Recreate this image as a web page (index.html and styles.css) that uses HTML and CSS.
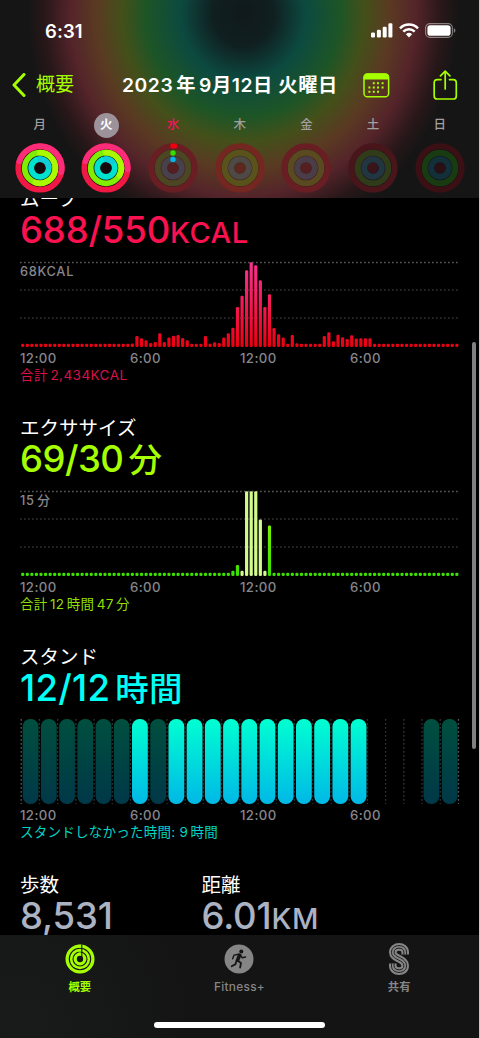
FILE: index.html
```html
<!DOCTYPE html>
<html lang="ja">
<head>
    <meta charset="UTF-8">
    <meta name="viewport" content="width=device-width, initial-scale=1.0">
    <title>フィットネス</title>
    <link rel="stylesheet" href="styles.css">
</head>
<body>

<div class="screen">
    <header class="header">
        <div class="status-bar">
            <span class="time">6:31</span>
            <div class="status-icons">
                <svg width="22" height="15" viewBox="0 0 22 15" fill="#fff">
                    <rect x="0" y="9.5" width="4" height="5" rx="1.2"/>
                    <rect x="5.9" y="6.8" width="4" height="7.7" rx="1.2"/>
                    <rect x="11.7" y="3.7" width="4" height="10.8" rx="1.2"/>
                    <rect x="17.4" y="0.3" width="4" height="14.2" rx="1.2"/>
                </svg>
                <svg width="20" height="15" viewBox="0 0 20 15" fill="none" stroke="#fff" stroke-width="2.5">
                    <path d="M1 5.3a12.8 12.8 0 0 1 18 0"/>
                    <path d="M4.3 8.7a8.1 8.1 0 0 1 11.4 0"/>
                    <path d="M6.9 11.2a4.5 4.5 0 0 1 6.2 0L10 14.4z" fill="#fff" stroke="none"/>
                </svg>
                <svg width="31" height="15" viewBox="0 0 31 15">
                    <rect x="0.6" y="0.6" width="26.8" height="13.8" rx="4.4" fill="none" stroke="#fff" stroke-opacity="0.45" stroke-width="1.1"/>
                    <rect x="2.4" y="2.3" width="23.2" height="10.4" rx="2.8" fill="#fff"/>
                    <path d="M28.8 5.2v4.6c1-.4 1.6-1.2 1.6-2.3s-.6-1.9-1.6-2.3z" fill="#fff" fill-opacity="0.45"/>
                </svg>
            </div>
        </div>

        <nav class="nav-bar">
            <a class="back" href="#">
                <svg width="14" height="24" viewBox="0 0 14 24" fill="none" stroke="#a6ff00" stroke-width="3" stroke-linecap="round" stroke-linejoin="round">
                    <path d="M12 1.500L2 12l10 10.500"/>
                </svg>
                <span>概要</span>
            </a>
            <h1 class="title"><span>2023</span><span class="kanji">年</span><span>9</span>月<span>12</span>日 火曜日</h1>
            <svg class="calendar" width="27" height="26" viewBox="0 0 27 26">
                <rect x="1" y="1" width="24.6" height="22.8" rx="3.4" fill="none" stroke="#a6ff00" stroke-width="1.5"/>
                <path d="M.6 6.6V4.2C.6 1.8 2 .4 4.400.4h17.800c2.400 0 3.800 1.400 3.800 3.800v2.400z" fill="#a6ff00"/>
                <g fill="#a6ff00">
                    <rect x="9.8" y="9.2" width="2" height="2"/><rect x="14" y="9.2" width="2" height="2"/><rect x="18.6" y="9.2" width="2" height="2"/>
                    <rect x="5.4" y="13.5" width="2" height="2"/><rect x="9.8" y="13.5" width="2" height="2"/><rect x="14" y="13.5" width="2" height="2"/><rect x="18.6" y="13.5" width="2" height="2"/>
                    <rect x="5.4" y="17.8" width="2" height="2"/><rect x="9.8" y="17.8" width="2" height="2"/><rect x="14" y="17.8" width="2" height="2"/>
                </g>
            </svg>
            <svg class="share" width="25" height="31" viewBox="0 0 25 31" fill="none" stroke="#a6ff00" stroke-width="1.7" stroke-linecap="round" stroke-linejoin="round">
                <path d="M8 9.6H4.3C2.3 9.6 1.2 10.7 1.2 12.7v13.2c0 2 1.1 3.1 3.1 3.1h15.9c2 0 3.1-1.1 3.1-3.1V12.7c0-2-1.1-3.1-3.1-3.1h-3.7"/>
                <path d="M12.2 19V1.5M7.5 5.9l4.7-4.7 4.7 4.7"/>
            </svg>
        </nav>

        <div class="week" id="week"></div>
    </header>

    <main class="content">
        <section class="metric move">
            <h2>ムーブ</h2>
            <p class="value">688/550<small>KCAL</small></p>
            <div class="chart" id="move-chart"><span class="peak">68KCAL</span></div>
            <div class="axis"><span>12:00</span><span>6:00</span><span>12:00</span><span>6:00</span></div>
            <p class="total">合計<i></i>2,434KCAL</p>
        </section>

        <section class="metric exercise">
            <h2>エクササイズ</h2>
            <p class="value">69/30<i></i><b>分</b></p>
            <div class="chart" id="exercise-chart"><span class="peak">15<i></i>分</span></div>
            <div class="axis"><span>12:00</span><span>6:00</span><span>12:00</span><span>6:00</span></div>
            <p class="total">合計<i></i>12<i></i>時間<i></i>47<i></i>分</p>
        </section>

        <section class="metric stand">
            <h2>スタンド</h2>
            <p class="value">12/12<i></i><b>時間</b></p>
            <div class="chart" id="stand-chart"></div>
            <div class="axis"><span>12:00</span><span>6:00</span><span>12:00</span><span>6:00</span></div>
            <p class="total">スタンドしなかった時間: 9<i></i>時間</p>
        </section>

        <div class="summary">
            <div class="steps">
                <h2>歩数</h2>
                <p class="value">8,531</p>
            </div>
            <div class="distance">
                <h2>距離</h2>
                <p class="value">6.01<small>KM</small></p>
            </div>
        </div>
    </main>

    <footer class="tab-bar">
        <div class="tabs">
            <a class="tab active" href="#">
                <svg width="30" height="32" viewBox="0 0 30 32">
                    <circle cx="15" cy="16" r="14.5" fill="#a6ff00"/>
                    <g fill="none" stroke="#151515" stroke-width="1.1">
                        <circle cx="15" cy="16" r="10.7"/>
                        <circle cx="15" cy="16" r="7"/>
                        <circle cx="15" cy="16" r="2.6" fill="#151515"/>
                        <path d="M16.800 1.500v12.500"/>
                    </g>
                    <path d="M13.300 1.800h2.600v3h-2.600zM13.300 5.900h2.600v2.500h-2.600zM13.300 9.600h2.600v2.700h-2.600z" fill="#a6ff00"/>
                </svg>
                <span>概要</span>
            </a>
            <a class="tab" href="#">
                <svg width="30" height="32" viewBox="0 0 30 32">
                    <circle cx="15" cy="16" r="14.5" fill="#858585"/>
                    <circle cx="17.300" cy="8.400" r="2" fill="#151515"/>
                    <g fill="none" stroke="#151515" stroke-linecap="round" stroke-linejoin="round">
                        <path d="M15.600 12.200l-2 5" stroke-width="3.6"/>
                        <path d="M14.400 11.300l-4.300.8-1.500 3.700M16.600 12.200l1.600 2.600 3.400-.8" stroke-width="1.4"/>
                        <path d="M13.400 17.600l3.600 2.400-.9 4.500M12.500 17.700l-.9 3.400-3.900 2.200" stroke-width="1.8"/>
                    </g>
                </svg>
                <span>Fitness+</span>
            </a>
            <a class="tab" href="#">
                <svg width="22" height="32" viewBox="0 0 22 32" fill="none">
                    <path d="M17.200 11.500V9.200C17.200 5.600 14.500 3.900 11 3.900S4.800 6 4.800 9.200c0 3.400 2.400 4.600 5.800 6.300 3.800 1.900 6.600 3.500 6.600 7.300s-2.700 5.300-6.200 5.300-6.200-2-6.200-5.300v-2.300" stroke="#858585" stroke-width="7.6"/>
                    <path d="M18.500 11.500V9.200C18.500 5 15.200 2.600 11 2.600S3.500 5.200 3.500 9.200c0 4.200 2.900 5.700 6.500 7.500 3.500 1.800 5.900 3 5.900 6.100 0 2.700-2 4-4.900 4s-4.900-1.400-4.900-4v-2.300M15.900 11.500V9.200c0-2.700-2-4-4.900-4s-4.900 1.400-4.900 4c0 2.700 1.900 3.500 5.100 5.100 4.200 2.100 7.300 4.100 7.300 8.500 0 4.300-3.300 6.600-7.500 6.600S3.500 27 3.500 22.800v-2.300" stroke="#151515" stroke-width="0.9"/>
                </svg>
                <span class="label-cjk">共有</span>
            </a>
        </div>
        <div class="home-indicator"></div>
    </footer>

    <div class="scrollbar"></div>
</div>

<script src="script.js"></script>
</body>
</html>
```

FILE: styles.css
```css
* {
    box-sizing: border-box;
}

body {
    margin: 0;
    background-color: #c8c8c8;
    font-family: Inter, "Noto Sans CJK JP", sans-serif;
    color: #fff;
}

h1, h2, p {
    margin: 0;
    font-weight: 400;
}

a {
    color: inherit;
    text-decoration: none;
}

svg {
    display: block;
    flex-shrink: 0;
}

.screen {
    position: relative;
    display: flex;
    flex-direction: column;
    width: 479px;
    height: 1038px;
    background-color: #000;
    overflow: hidden;
}

/* Header */
.header {
    flex: none;
    height: 198px;
    background: radial-gradient(ellipse 216px 228px at 243px 14px,
        #10191b 0%, #101f20 14%, #0c4a40 29%, #1d5526 45%,
        #43501a 56%, #5a3a22 68%, #54242a 80%, #281719 92%, #151515 100%);
}

.status-bar {
    display: flex;
    justify-content: space-between;
    height: 61px;
    padding: 0 23px 0 45px;
}

.time {
    font-size: 18.5px;
    font-weight: 600;
    line-height: 62px;
    letter-spacing: 0.1px;
}

.status-icons {
    display: flex;
    gap: 6px;
    padding-top: 23px;
}

.nav-bar {
    display: flex;
    align-items: center;
    height: 48px;
    padding-left: 12px;
}

.back {
    display: flex;
    align-items: center;
    width: 110px;
    gap: 10px;
    color: #a6ff00;
    font-size: 19px;
    line-height: 24px;
    padding-bottom: 1px;
}

.title {
    width: 241px;
    padding-bottom: 2px;
    font-size: 19.3px;
    font-weight: 600;
    letter-spacing: 0.55px;
    white-space: nowrap;
}

.title .kanji {
    margin: 0 3px;
}

.calendar {
    margin: 2px 43px 0 0;
}

.week {
    display: grid;
    grid-template-columns: repeat(7, 66.7px);
    padding-left: 6.3px;
    padding-top: 4px;
}

.day {
    display: flex;
    flex-direction: column;
    align-items: center;
    gap: 4.5px;
    color: #a29fa3;
    font-size: 12.5px;
    font-weight: 500;
}

.day span {
    width: 25px;
    height: 25px;
    border-radius: 50%;
    line-height: 24px;
    text-align: center;
}

.day.selected span {
    background-color: #9c929a;
    color: #fff;
    font-weight: 700;
}

.day.today span {
    color: #fa114f;
}

/* Metrics */
.content {
    flex: 1;
    min-height: 0;
    padding: 0 20px;
    overflow: hidden;
}

.metric {
    height: 228.7px;
}

.metric.move {
    margin-top: -11.7px;
}

.metric h2,
.summary h2 {
    height: 26px;
    font-size: 19.5px;
    line-height: 27px;
}

.value {
    height: 49.5px;
    font-size: 36.5px;
    font-weight: 500;
    line-height: 37px;
    letter-spacing: -0.15px;
    white-space: nowrap;
}

.value small {
    font-size: 29px;
    letter-spacing: 0.5px;
}

.value b {
    font-size: 33.5px;
    font-weight: 500;
}

.value i {
    display: inline-block;
    width: 5px;
}

.exercise .value {
    letter-spacing: -0.5px;
}

.stand .value {
    letter-spacing: 0.3px;
}

.move .value { color: #fa114f; }
.exercise .value { color: #a6ff00; }
.stand .value { color: #00fff6; }
.summary .value { color: #abb2c2; }

.chart {
    position: relative;
    height: 85px;
}

.chart svg {
    overflow: visible;
}

.peak {
    position: absolute;
    top: 1px;
    left: 0;
    color: #87878c;
    font-size: 12.8px;
    font-weight: 500;
    line-height: 17px;
    letter-spacing: 0.7px;
}

.peak i,
.total i {
    display: inline-block;
    width: 2.5px;
}

.axis {
    display: grid;
    grid-template-columns: 110px 110px 110px 1fr;
    height: 20px;
    color: #87878c;
    font-size: 13.2px;
    font-weight: 500;
    line-height: 23px;
    letter-spacing: 0.4px;
}

.total {
    font-size: 13.5px;
    line-height: 17px;
    letter-spacing: 0.25px;
}

.move .total {
    color: #dc1048;
    letter-spacing: 0.45px;
}

.exercise .total { color: #92df02; }
.stand .total { color: #00d5c5; }

.summary {
    display: grid;
    grid-template-columns: 181.5px 1fr;
}

/* Tab bar */
.tab-bar {
    flex: none;
    height: 103px;
    background: radial-gradient(circle at 20px 90px, #191b1b, #141414 170px);
}

.tabs {
    display: grid;
    grid-template-columns: repeat(3, 1fr);
    height: 87px;
    padding-top: 8px;
}

.tab {
    display: flex;
    flex-direction: column;
    align-items: center;
    color: #858585;
    font-size: 11.8px;
    font-weight: 500;
    line-height: 24px;
    letter-spacing: 0.3px;
}

.tab .label-cjk,
.tab.active {
    font-size: 11.3px;
    font-weight: 700;
    letter-spacing: 0;
}

.tab.active {
    color: #a6ff00;
}

.home-indicator {
    width: 171px;
    height: 6px;
    margin: 0 auto;
    border-radius: 3px;
    background-color: #fff;
}

.scrollbar {
    position: absolute;
    top: 342px;
    right: 3px;
    width: 4px;
    height: 407px;
    border-radius: 2px;
    background-color: #808080;
}
```

FILE: script.js
```js
const CHART_WIDTH = 440;
const CHART_HEIGHT = 85;
const BAR_STEP = 4.57;

// Activity rings for each day of the week
const days = [
    { label: "月", rings: "full", move: 0.28, exercise: 0.55, stand: 0.22 },
    { label: "火", rings: "full", move: 0.26, exercise: 0.33, stand: 0.12, state: "selected" },
    { label: "水", rings: "start", state: "today", colors: ["#681e22", "#4c4722", "#48404a"] },
    { label: "木", rings: "empty", colors: ["#742620", "#59531b", "#4f4945"] },
    { label: "金", rings: "empty", colors: ["#681e22", "#5a4a20", "#4a3d47"] },
    { label: "土", rings: "empty", colors: ["#48151b", "#2f3b19", "#213640"] },
    { label: "日", rings: "empty", colors: ["#3b1015", "#193b12", "#132f3a"] }
];

const radii = [21.7, 15.3, 8.8];

function arc(r, from, to, color) {
    const point = t => {
        const a = t * 2 * Math.PI - Math.PI / 2;
        return (25 + r * Math.cos(a)).toFixed(2) + " " + (25 + r * Math.sin(a)).toFixed(2);
    };
    const large = to - from > 0.5 ? 1 : 0;
    return `<path d="M${point(from)}A${r} ${r} 0 ${large} 1 ${point(to)}" fill="none" stroke="${color}" stroke-width="5.8" stroke-linecap="round"/>`;
}

function drawRings(day) {
    let out = "";
    if (day.rings === "full") {
        const base = ["#f01844", "#80ee00", "#00e2d0"];
        const lap = ["#fc2c78", "#a9fa00", "#10cbd8"];
        const ends = [day.move, day.exercise, day.stand];
        out += '<circle cx="25" cy="25" r="24" fill="#16090c"/>';
        radii.forEach((r, i) => {
            out += `<circle cx="25" cy="25" r="${r}" fill="none" stroke="${base[i]}" stroke-width="5.8"/>`;
            out += arc(r, i === 0 ? -0.2 : 0, ends[i], lap[i]);
        });
    } else {
        out += '<circle cx="25" cy="25" r="19" fill="#120c18" opacity="0.4"/>';
        radii.forEach((r, i) => {
            out += `<circle cx="25" cy="25" r="${r}" fill="none" stroke="${day.colors[i]}" stroke-width="6"/>`;
        });
        out += `<circle cx="25" cy="25" r="5.2" fill="${day.colors[0]}" opacity="0.6"/>`;
    }
    if (day.rings === "start") {
        out += '<rect x="22.2" y="0.6" width="7" height="5" rx="2.5" fill="#f0000f"/>';
        out += '<circle cx="25" cy="10" r="2.7" fill="#38dd00"/><circle cx="25" cy="16.5" r="2.7" fill="#00b9e8"/>';
    }
    return `<svg width="50" height="50" viewBox="0 0 50 50">${out}</svg>`;
}

document.getElementById("week").innerHTML = days.map(day =>
    `<div class="day ${day.state || ""}"><span>${day.label}</span>${drawRings(day)}</div>`
).join("");

// Quarter-hour bars; slots that are missing get a dot
const move = {
    24: 3.5, 25: 11, 26: 8.7, 27: 6.7, 28: 4, 29: 5, 30: 13.7, 31: 5, 32: 9.5, 33: 11.3,
    34: 12, 35: 9, 36: 6.7, 40: 11, 42: 4.8, 43: 4, 44: 9.5, 45: 13.7, 46: 19.3, 47: 40,
    48: 51.3, 49: 76.7, 50: 84.7, 51: 81.7, 52: 66.7, 53: 40, 54: 52.7, 55: 19, 56: 12.7,
    57: 9.5, 59: 12, 60: 3.8, 66: 11, 67: 14.7, 68: 5.8, 69: 12.3, 70: 9.7, 71: 8, 72: 11.7,
    73: 8.5, 74: 8.7, 75: 8.8, 76: 8.8
};
const exercise = { 46: 5.3, 47: 11, 48: 5.3, 49: 84.7, 50: 84.7, 51: 84.7, 52: 56.5, 53: 5.3, 54: 50.5 };
const workout = [48, 49, 50, 51, 52, 53];

function gridLines() {
    return [[0.5, 0.34], [28, 0.2], [56, 0.2]].map(([y, opacity]) =>
        `<path d="M0 ${y}H${CHART_WIDTH}" stroke="#fff" stroke-opacity="${opacity}" stroke-width="1.3" stroke-dasharray="1.7 2.3"/>`
    ).join("");
}

function drawBars(id, values, stops, color) {
    let out = `<defs><linearGradient id="${id}-fill" gradientUnits="userSpaceOnUse" x1="0" y1="0" x2="0" y2="${CHART_HEIGHT}">
        <stop offset="0" stop-color="${stops[0]}"/><stop offset="1" stop-color="${stops[1]}"/></linearGradient></defs>`;
    out += gridLines();
    for (let i = 0; i < 96; i++) {
        const h = values[i] || 3.2;
        const x = (1.1 + i * BAR_STEP).toFixed(2);
        out += `<rect x="${x}" y="${CHART_HEIGHT - h}" width="3.2" height="${h}" rx="1.3" fill="${color(i)}"/>`;
    }
    document.getElementById(id).insertAdjacentHTML("afterbegin",
        `<svg width="${CHART_WIDTH}" height="${CHART_HEIGHT}">${out}</svg>`);
}

drawBars("move-chart", move, ["#fa3295", "#ec0010"], () => "url(#move-chart-fill)");
drawBars("exercise-chart", exercise, ["#a6ff00", "#38e000"], i => workout.includes(i) ? "#d3fa8c" : "url(#exercise-chart-fill)");

// Hourly stand capsules: 1 = stood, 0 = idle, - = no data
const stand = "0000001011111111111---00";
let capsules = `<defs>
    <linearGradient id="stood" x2="0" y2="1"><stop offset="0" stop-color="#00ffd2"/><stop offset="1" stop-color="#00b8e6"/></linearGradient>
    <linearGradient id="idle" x2="0" y2="1"><stop offset="0" stop-color="#004f3f"/><stop offset="1" stop-color="#003848"/></linearGradient>
</defs>`;
for (let i = 0; i <= 24; i++) {
    const x = 1.2 + i * 18.22;
    const opacity = i === 0 || i === 24 ? 0.34 : 0.2;
    capsules += `<path d="M${x} 0V${CHART_HEIGHT}" stroke="#fff" stroke-opacity="${opacity}" stroke-width="1.3" stroke-dasharray="1.7 2.3"/>`;
}
[...stand].forEach((s, i) => {
    if (s === "-") return;
    const x = (2.7 + i * 18.22).toFixed(2);
    capsules += `<rect x="${x}" y="0" width="15.8" height="${CHART_HEIGHT}" rx="7.5" fill="url(#${s === "1" ? "stood" : "idle"})"/>`;
});
document.getElementById("stand-chart").innerHTML =
    `<svg width="${CHART_WIDTH}" height="${CHART_HEIGHT}">${capsules}</svg>`;
```
